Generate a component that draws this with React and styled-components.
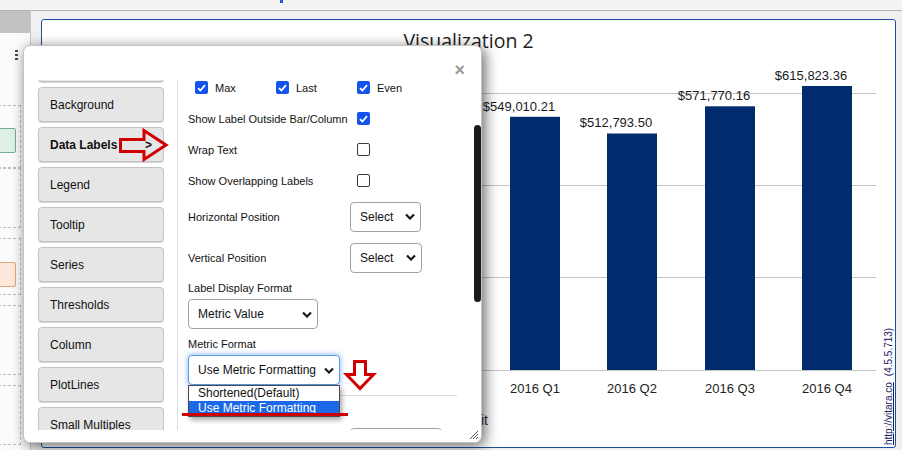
import React from 'react';
import styled, { createGlobalStyle } from 'styled-components';

const GlobalStyle = createGlobalStyle`
  html, body {
    margin: 0;
    padding: 0;
  }
  body {
    width: 902px;
    height: 450px;
    overflow: hidden;
    background: #f0f0f0;
    font-family: "Liberation Sans", Arial, sans-serif;
  }
`;

const RED = '#d00000';

const Page = styled.div`
  position: relative;
  width: 902px;
  height: 450px;
  display: flex;
  flex-direction: column;
  background: #f0f0f0;
`;

const TopBar = styled.div`
  height: 10px;
  flex-shrink: 0;
  background: #f3f3f3;
  border-bottom: 1px solid #b4b4b4;
  display: flex;
  padding-left: 280px;
`;

const TabMark = styled.span`
  width: 3px;
  height: 3px;
  background: #1a5fd0;
`;

const Body = styled.div`
  flex: 1;
  display: flex;
  min-height: 0;
`;

const Sidebar = styled.div`
  width: 30px;
  flex-shrink: 0;
  border-right: 1px solid #c6c6c6;
  background: #fbfbfb;
  display: flex;
  flex-direction: column;
  overflow: hidden;
`;

const SideHeader = styled.div`
  height: 22px;
  background: #c2c2c2;
`;

const SideDots = styled.div`
  height: 72px;
  box-sizing: border-box;
  padding: 16px 0 0 15px;

  &::before {
    content: '';
    display: block;
    width: 3px;
    height: 12px;
    background: radial-gradient(circle, #444 1.1px, transparent 1.4px) 0 0 / 3px 4px repeat-y;
  }
`;

const SideCard = styled.div`
  margin-left: -2px;
  margin-bottom: ${p => p.$gap}px;
  width: 23px;
  height: ${p => p.$h}px;
  box-sizing: border-box;
  border: 1px dashed #bcbcbc;
  padding-top: ${p => p.$pad || 0}px;
`;

const Chip = styled.div`
  width: 17px;
  height: 25px;
  box-sizing: border-box;
  border-radius: 2px;
  background: ${p => (p.$tone === 'green' ? '#dff0e7' : '#fce9da')};
  border: 1px solid ${p => (p.$tone === 'green' ? '#74ad8e' : '#e2a577')};
`;

const Main = styled.div`
  flex: 1;
  display: flex;
  padding: 8px 6px 2px 10px;
`;

const ChartPanel = styled.div`
  flex: 1;
  display: flex;
  flex-direction: column;
  background: #fff;
  border: 1px solid #1d4f9c;
  border-radius: 3px;
`;

const ChartTitle = styled.div`
  height: 44px;
  box-sizing: border-box;
  padding-top: 7px;
  text-align: center;
  font-family: "Open Sans", "Noto Sans", sans-serif;
  font-size: 19.5px;
  line-height: 27px;
  color: #1e1e1e;
`;

/* ---------- dialog ---------- */

const Dialog = styled.div`
  position: absolute;
  left: 23px;
  top: 45px;
  width: 459px;
  height: 398px;
  box-sizing: border-box;
  display: flex;
  flex-direction: column;
  background: #fff;
  border: 1px solid #c4c4c4;
  border-radius: 7px;
  box-shadow: 3px 3px 14px rgba(0, 0, 0, 0.6);
  font-family: "Liberation Sans", Arial, sans-serif;
  color: #111;
`;

const DialogHeader = styled.div`
  height: 34px;
  box-sizing: border-box;
  display: flex;
  justify-content: flex-end;
  padding: 15px 16px 0 0;
`;

const CloseButton = styled.span`
  font-size: 18px;
  line-height: 18px;
  font-weight: bold;
  color: #9a9a9a;
  cursor: pointer;
`;

const DialogBody = styled.div`
  height: 350px;
  display: flex;
  padding-left: 14px;
`;

const NavScroll = styled.div`
  width: 126px;
  flex-shrink: 0;
  overflow: hidden;
`;

const NavList = styled.div`
  margin-top: -33px;
  display: flex;
  flex-direction: column;
  gap: 5px;
`;

const NavButton = styled.div`
  height: 35px;
  flex-shrink: 0;
  box-sizing: border-box;
  display: flex;
  align-items: center;
  justify-content: space-between;
  padding: 0 11px 0 11px;
  background: #e6e6e6;
  border: 1px solid #c3c3c3;
  border-radius: 4px;
  box-shadow: 0 1px 1px rgba(0, 0, 0, 0.18);
  font-size: 12px;
  font-weight: ${p => (p.$active ? 'bold' : 'normal')};
  color: #111;
`;

const Separator = styled.div`
  width: 1px;
  margin-left: 13px;
  background: #dcdcdc;
`;

const ContentPane = styled.div`
  flex: 1;
  display: flex;
  min-width: 0;
`;

const ContentScroll = styled.div`
  flex: 1;
  overflow: hidden;
  padding-left: 10px;
`;

const ContentInner = styled.div`
  margin-top: -8px;
  display: flex;
  flex-direction: column;
`;

const ScrollTrack = styled.div`
  width: 7px;
  flex-shrink: 0;
  padding-top: 45px;
`;

const ScrollThumb = styled.div`
  height: 177px;
  border-radius: 4px;
  background: #1b1b1b;
`;

const CheckRow = styled.div`
  height: 31px;
  display: flex;
  align-items: center;
`;

const CheckItem = styled.label`
  width: 81px;
  display: flex;
  align-items: center;
  gap: 7px;
  font-size: 11px;
`;

const FieldRow = styled.div`
  height: ${p => p.$h}px;
  margin-top: ${p => p.$mt || 0}px;
  flex-shrink: 0;
  display: flex;
  align-items: center;
`;

const FieldLabel = styled.span`
  width: 162px;
  flex-shrink: 0;
  font-size: 11px;
`;

const Box = styled.span`
  width: 13px;
  height: 13px;
  margin-left: 7px;
  flex-shrink: 0;
  box-sizing: border-box;
  border-radius: 2px;
  display: flex;
  align-items: center;
  justify-content: center;
  background: ${p => (p.$checked ? '#1553ef' : '#fff')};
  border: ${p => (p.$checked ? 'none' : '1px solid #3a3a3a')};
`;

const StackLabel = styled.div`
  font-size: 11px;
  line-height: 14px;
  margin-top: ${p => p.$mt}px;
`;

const SelectWrap = styled.div`
  position: relative;
  width: ${p => p.$w}px;
  margin-top: ${p => p.$mt || 0}px;
  flex-shrink: 0;
  z-index: ${p => (p.$open ? 2 : 0)};
`;

const SelectBox = styled.div`
  height: 30px;
  box-sizing: border-box;
  display: flex;
  align-items: center;
  justify-content: space-between;
  padding: 0 5px 0 9px;
  background: #fff;
  border: 1px solid ${p => (p.$focused ? '#5b9be6' : '#a3a3a3')};
  border-radius: 4px;
  box-shadow: ${p => (p.$focused ? '0 0 5px 1px rgba(70, 150, 235, 0.55)' : 'none')};
  font-size: 12px;
  color: #111;
`;

const DropList = styled.div`
  position: absolute;
  left: 0;
  top: 100%;
  width: 100%;
  box-sizing: border-box;
  background: #fff;
  border: 1px solid #4a4a4a;
  box-shadow: 2px 3px 5px rgba(0, 0, 0, 0.35);
`;

const DropOption = styled.div`
  height: 15px;
  line-height: 15px;
  padding-left: 9px;
  font-size: 12px;
  background: ${p => (p.$selected ? '#1a68e6' : '#fff')};
  color: ${p => (p.$selected ? '#fff' : '#111')};
`;

const Rule = styled.div`
  height: 1px;
  margin: 10px 17px 0 0;
  background: #dadada;
`;

const ResizeGrip = styled.svg`
  position: absolute;
  right: 3px;
  bottom: 3px;
`;

/* annotation overlays drawn over the dialog */
const Annot = styled.svg`
  position: absolute;
  left: ${p => p.$x}px;
  top: ${p => p.$y}px;
  overflow: visible;
  z-index: 5;
`;

const RedLine = styled.div`
  position: absolute;
  left: 158px;
  top: 367px;
  width: 166px;
  height: 3px;
  background: ${RED};
  z-index: 5;
`;

const Chevron = () => (
  <svg width="10" height="7" viewBox="0 0 10 7">
    <path d="M1 1.5 L5 5.5 L9 1.5" fill="none" stroke="#1a1a1a" strokeWidth="2.2" />
  </svg>
);

const Checkbox = ({ checked }) => (
  <Box $checked={checked}>
    {checked && (
      <svg width="9" height="8" viewBox="0 0 9 8">
        <path d="M1 4.2 L3.4 6.5 L8 1.2" fill="none" stroke="#fff" strokeWidth="1.8" />
      </svg>
    )}
  </Box>
);

const Select = ({ w, value, focused, mt, children }) => (
  <SelectWrap $w={w} $mt={mt} $open={!!children}>
    <SelectBox $focused={focused}>
      <span>{value}</span>
      <Chevron />
    </SelectBox>
    {children}
  </SelectWrap>
);

// first entry is scrolled out of view, only its bottom edge shows
const navItems = [
  '', 'Background', 'Data Labels', 'Legend', 'Tooltip', 'Series',
  'Thresholds', 'Column', 'PlotLines', 'Small Multiples',
];

const bars = [
  { label: '2016 Q1', text: '$549,010.21', value: 549010.21 },
  { label: '2016 Q2', text: '$512,793.50', value: 512793.5 },
  { label: '2016 Q3', text: '$571,770.16', value: 571770.16 },
  { label: '2016 Q4', text: '$615,823.36', value: 615823.36 },
];

const BASE = 306;
const SCALE = 0.0004612;

const Chart = () => (
  <svg width="853" height="383" style={{ display: 'block' }}>
    {[29, 121, 213].map(y => (
      <line key={y} x1="20" x2="834" y1={y + 0.5} y2={y + 0.5} stroke="#c4c4c4" />
    ))}
    <line x1="20" x2="834" y1={BASE + 0.5} y2={BASE + 0.5} stroke="#c4c4c4" />
    {bars.map((b, i) => {
      const x = Math.round(468 + i * 97.33);
      const h = b.value * SCALE;
      const top = BASE - h;
      return (
        <g key={b.label}>
          <rect x={x} y={top} width="50" height={h} fill="#012b6c" />
          <text x={x + 25 - 16} y={top - 6} textAnchor="middle" fontSize="13"
            fontFamily="Liberation Sans, Arial, sans-serif" fill="#1a1a1a">{b.text}</text>
          <text x={x + 25} y={329} textAnchor="middle" fontSize="13"
            fontFamily="Liberation Sans, Arial, sans-serif" fill="#222">{b.label}</text>
        </g>
      );
    })}
    <text x="446" y="361" textAnchor="end" fontSize="14"
      fontFamily="Liberation Sans, Arial, sans-serif" fill="#333">Profit</text>
    <text transform="translate(850 381) rotate(-90)" fontSize="10"
      fontFamily="Liberation Sans, Arial, sans-serif" fill="#14215a">
      <tspan textDecoration="underline">http://vitara.co</tspan>
      <tspan dx="6">(4.5.5.713)</tspan>
    </text>
  </svg>
);

export default function App() {
  return (
    <>
      <GlobalStyle />
      <Page>
        <TopBar>
          <TabMark />
        </TopBar>
        <Body>
          <Sidebar>
            <SideHeader />
            <SideDots />
            <SideCard $h={63} $pad={22} $gap={0}><Chip $tone="green" /></SideCard>
            <SideCard $h={60} $gap={10} />
            <SideCard $h={57} $pad={23} $gap={10}><Chip $tone="orange" /></SideCard>
            <SideCard $h={70} $gap={10} />
            <SideCard $h={60} $gap={0} />
          </Sidebar>
          <Main>
            <ChartPanel>
              <ChartTitle>Visualization 2</ChartTitle>
              <Chart />
            </ChartPanel>
          </Main>
        </Body>

        <Dialog>
          <DialogHeader>
            <CloseButton>×</CloseButton>
          </DialogHeader>
          <DialogBody>
            <NavScroll>
              <NavList>
                {navItems.map((item, i) => (
                  <NavButton key={i} $active={item === 'Data Labels'}>
                    <span>{item}</span>
                    {item === 'Data Labels' && <span>&gt;</span>}
                  </NavButton>
                ))}
              </NavList>
            </NavScroll>
            <Separator />
            <ContentPane>
              <ContentScroll>
                <ContentInner>
                  <CheckRow>
                    <CheckItem><Checkbox checked />Max</CheckItem>
                    <CheckItem><Checkbox checked />Last</CheckItem>
                    <CheckItem><Checkbox checked />Even</CheckItem>
                  </CheckRow>
                  <FieldRow $h={31}>
                    <FieldLabel>Show Label Outside Bar/Column</FieldLabel>
                    <Checkbox checked />
                  </FieldRow>
                  <FieldRow $h={31}>
                    <FieldLabel>Wrap Text</FieldLabel>
                    <Checkbox />
                  </FieldRow>
                  <FieldRow $h={31}>
                    <FieldLabel>Show Overlapping Labels</FieldLabel>
                    <Checkbox />
                  </FieldRow>
                  <FieldRow $h={41}>
                    <FieldLabel>Horizontal Position</FieldLabel>
                    <Select w={71} value="Select" />
                  </FieldRow>
                  <FieldRow $h={41}>
                    <FieldLabel>Vertical Position</FieldLabel>
                    <Select w={72} value="Select" />
                  </FieldRow>
                  <StackLabel $mt={3}>Label Display Format</StackLabel>
                  <Select w={130} mt={4} value="Metric Value" />
                  <StackLabel $mt={8}>Metric Format</StackLabel>
                  <Select w={152} mt={4} value="Use Metric Formatting" focused>
                    <DropList>
                      <DropOption>Shortened(Default)</DropOption>
                      <DropOption $selected>Use Metric Formatting</DropOption>
                    </DropList>
                  </Select>
                  <Rule />
                  <FieldRow $h={41} $mt={26}>
                    <FieldLabel />
                    <Select w={92} value="" />
                  </FieldRow>
                </ContentInner>
              </ContentScroll>
              <ScrollTrack>
                <ScrollThumb />
              </ScrollTrack>
            </ContentPane>
          </DialogBody>

          <Annot $x={95} $y={82} width="50" height="34" viewBox="0 0 50 34">
            <path d="M1.5 11.5 H25 V2.5 L47 17 L25 31.5 V23.5 H1.5 Z"
              fill="none" stroke={RED} strokeWidth="3" />
          </Annot>
          <Annot $x={320} $y={314} width="31" height="31" viewBox="0 0 31 31">
            <path d="M10.5 1.5 H21.5 V14.5 H29.5 L16 28.5 L2.5 14.5 H10.5 Z"
              fill="none" stroke={RED} strokeWidth="3" />
          </Annot>
          <RedLine />

          <ResizeGrip width="8" height="8" viewBox="0 0 8 8">
            <path d="M8 0 L0 8 M8 3 L3 8 M8 6 L6 8" stroke="#555" strokeWidth="1" />
          </ResizeGrip>
        </Dialog>
      </Page>
    </>
  );
}
